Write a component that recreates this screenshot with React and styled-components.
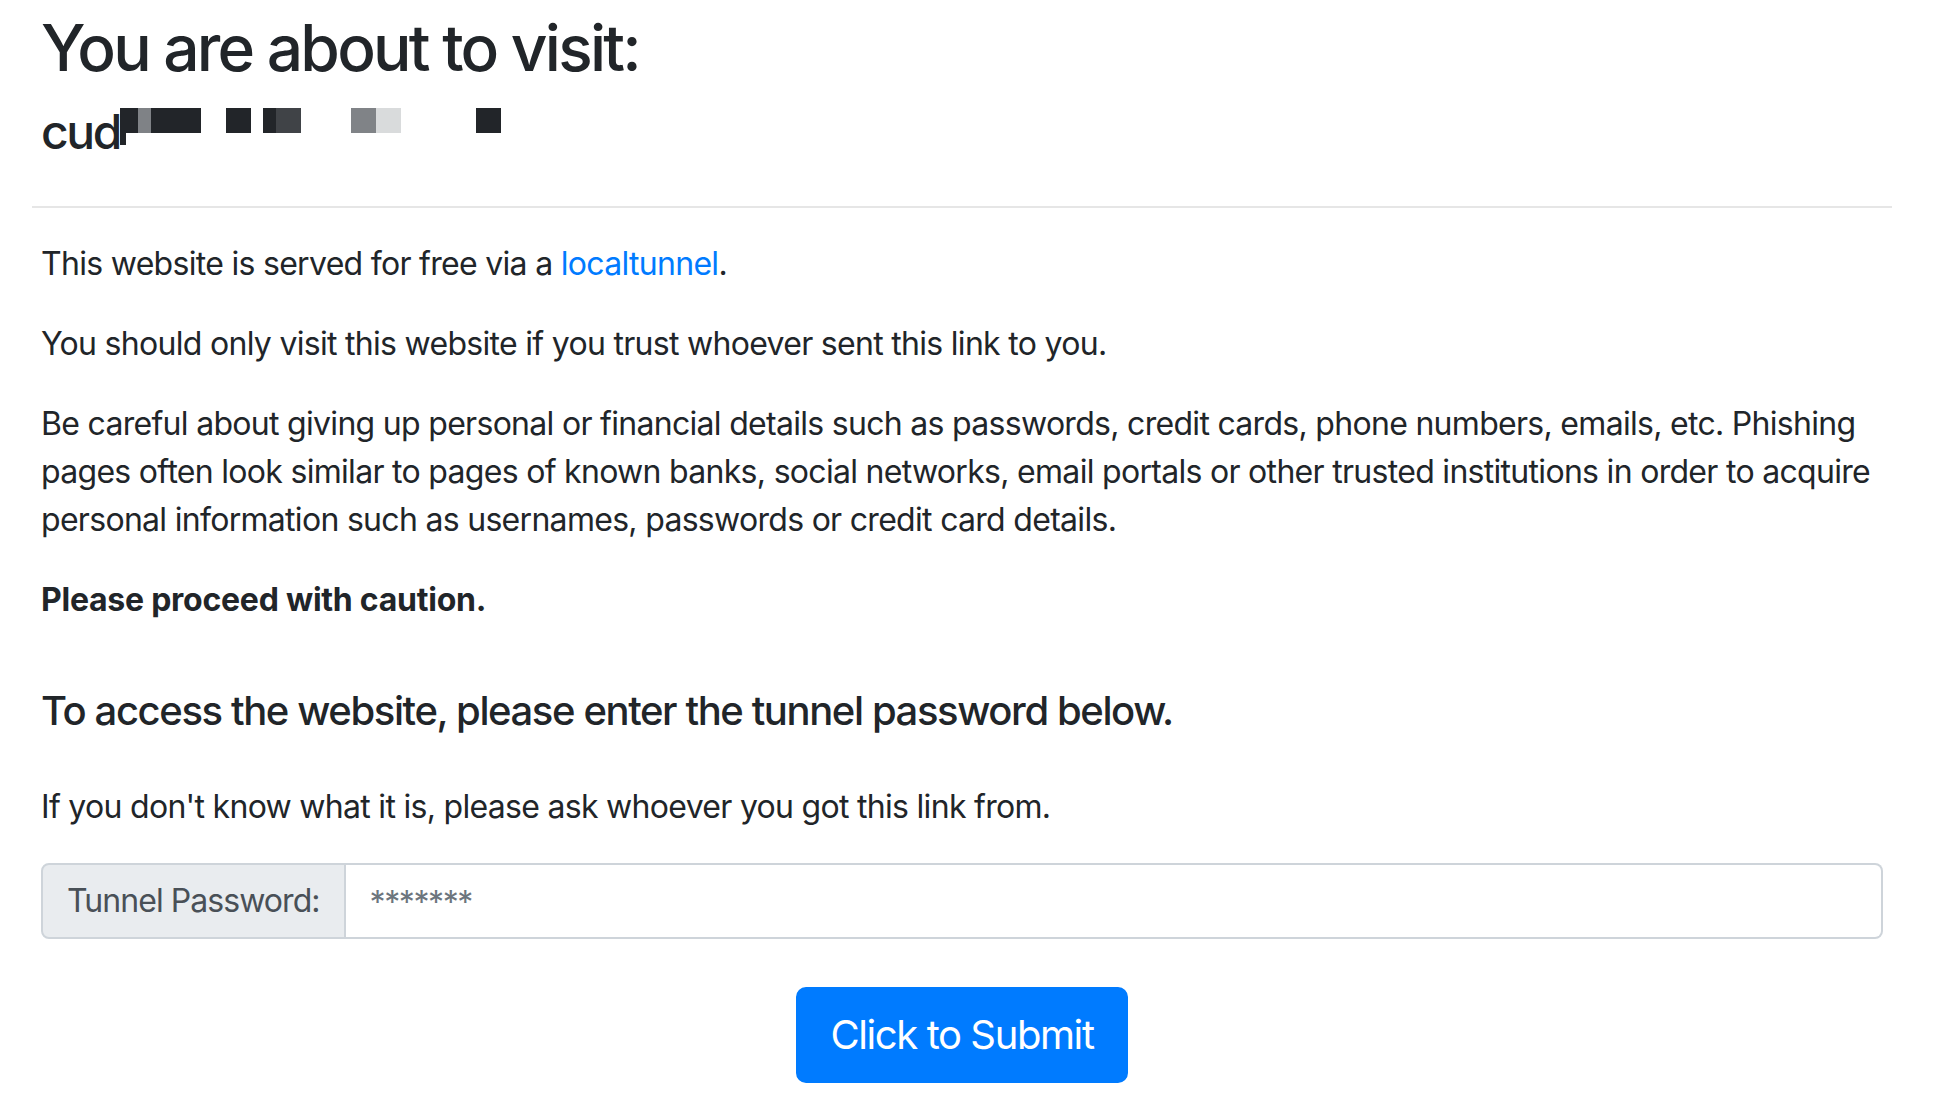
import React from "react";
import styled, { createGlobalStyle } from "styled-components";

const GlobalStyle = createGlobalStyle`
  html, body {
    margin: 0;
    padding: 0;
    background: #fff;
  }
  body {
    font-family: Inter, "Noto Sans", "Liberation Sans", sans-serif;
    color: #212529;
  }
  * {
    box-sizing: border-box;
  }
`;

const Page = styled.div`
  padding: 10px 46px 40px 32px;
`;

const Title = styled.h2`
  font-size: 64px;
  font-weight: 500;
  line-height: 1.2;
  letter-spacing: -2.75px;
  margin: 0 0 16px;
  padding-left: 9px;
`;

const Host = styled.h4`
  font-size: 48px;
  font-weight: 500;
  line-height: 1.2;
  letter-spacing: -2.4px;
  margin: 0 0 46px;
  padding-left: 9px;
  height: 57.6px;
`;

const Redacted = styled.svg`
  vertical-align: 4px;
`;

const Divider = styled.hr`
  border: 0;
  border-top: 2px solid #e6e6e6;
  margin: 0 0 32px;
`;

const Content = styled.div`
  padding: 0 9px;
`;

const Paragraph = styled.p`
  font-size: 32px;
  line-height: 48px;
  letter-spacing: ${(p) => (p.$bold ? "-0.25px" : "-0.7px")};
  margin: 0 0 32px;
  font-weight: ${(p) => (p.$bold ? 700 : 400)};
`;

const Link = styled.a`
  color: #007bff;
  text-decoration: none;
`;

const SubTitle = styled.h5`
  font-size: 40px;
  font-weight: 500;
  line-height: 48px;
  letter-spacing: -1.4px;
  margin: 63px 0 48px;
`;

const InputGroup = styled.div`
  display: flex;
  align-items: stretch;
  width: 100%;
  height: 76px;
  margin-bottom: 48px;
`;

const InputLabel = styled.span`
  display: flex;
  align-items: center;
  padding: 12px 24px;
  font-size: 32px;
  line-height: 48px;
  letter-spacing: -0.95px;
  color: #495057;
  background: #e9ecef;
  border: 2px solid #ced4da;
  border-radius: 8px 0 0 8px;
  white-space: nowrap;
`;

const Input = styled.input`
  flex: 1;
  min-width: 0;
  padding: 14px 24px 10px;
  font-family: inherit;
  font-size: 32px;
  line-height: 48px;
  letter-spacing: -1.4px;
  color: #495057;
  background: #fff;
  border: 2px solid #ced4da;
  border-left: 0;
  border-radius: 0 8px 8px 0;
  outline: none;

  &::placeholder {
    color: #6c757d;
    opacity: 1;
  }
`;

const ButtonRow = styled.div`
  display: flex;
  justify-content: center;
`;

const SubmitButton = styled.button`
  font-family: inherit;
  font-size: 40px;
  line-height: 60px;
  letter-spacing: -1.4px;
  padding: 16px 32px;
  height: 96px;
  color: #fff;
  background: #007bff;
  border: 2px solid #007bff;
  border-radius: 10px;
  cursor: pointer;
`;

const dark = "#222529";

const blocks = [
  { x: 0, w: 18, c: dark },
  { x: 18, w: 13, c: "#7f8286" },
  { x: 31, w: 50, c: dark },
  { x: 106, w: 25, c: dark },
  { x: 143, w: 13, c: dark },
  { x: 156, w: 25, c: "#404347" },
  { x: 231, w: 25, c: "#808387" },
  { x: 256, w: 25, c: "#d9dbdc" },
  { x: 356, w: 25, c: dark },
];

function RedactedHost() {
  return (
    <Redacted width="381" height="37" viewBox="0 0 381 37">
      {blocks.map((b) => (
        <rect key={b.x} x={b.x} y="0" width={b.w} height="25" fill={b.c} />
      ))}
      <rect x="0" y="25" width="6" height="12" fill={dark} />
    </Redacted>
  );
}

export default function App() {
  return (
    <>
      <GlobalStyle />
      <Page>
        <Title>You are about to visit:</Title>
        <Host>
          cud
          <RedactedHost />
        </Host>
        <Divider />
        <Content>
          <Paragraph>
            This website is served for free via a{" "}
            <Link href="#">localtunnel</Link>.
          </Paragraph>
          <Paragraph>
            You should only visit this website if you trust whoever sent this
            link to you.
          </Paragraph>
          <Paragraph>
            Be careful about giving up personal or financial details such as
            passwords, credit cards, phone numbers, emails, etc. Phishing pages
            often look similar to pages of known banks, social networks, email
            portals or other trusted institutions in order to acquire personal
            information such as usernames, passwords or credit card details.
          </Paragraph>
          <Paragraph $bold>Please proceed with caution.</Paragraph>
          <SubTitle>
            To access the website, please enter the tunnel password below.
          </SubTitle>
          <Paragraph>
            If you don't know what it is, please ask whoever you got this link
            from.
          </Paragraph>
          <InputGroup>
            <InputLabel>Tunnel Password:</InputLabel>
            <Input type="text" placeholder="*******" />
          </InputGroup>
          <ButtonRow>
            <SubmitButton type="button">Click to Submit</SubmitButton>
          </ButtonRow>
        </Content>
      </Page>
    </>
  );
}
